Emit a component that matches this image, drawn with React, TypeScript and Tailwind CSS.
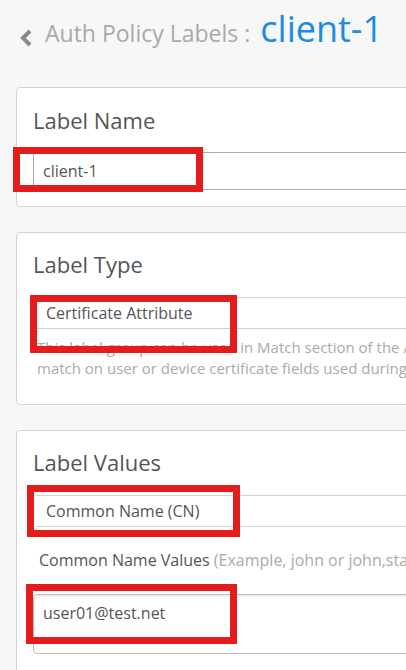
import React from 'react'

const font = { fontFamily: '"Open Sans", "Liberation Sans", sans-serif' }

function Card({ title, children, className = '' }: { title: string; children: React.ReactNode; className?: string }) {
  return (
    <div className={`w-[560px] bg-white border border-[#d4d4d4] rounded-[4px] px-4 ${className}`}>
      <h2 className="text-[22px] leading-[28px] text-[#555]">{title}</h2>
      {children}
    </div>
  )
}

function Mark({ className }: { className: string }) {
  return <div className={`absolute border-[7px] border-[#e41c1c] ${className}`} />
}

export default function App() {
  return (
    <div className="relative w-[406px] h-[670px] overflow-hidden bg-[#f7f7f7]" style={font}>
      <div className="pl-4">
        <div className="flex items-baseline h-[87px] pt-[2px]">
          <svg width="16" height="20" viewBox="0 0 16 20" className="ml-[2px] mr-[11px] self-center -mt-[14px]">
            <polyline points="12,3 5,10 12,17" fill="none" stroke="#8a8a8a" strokeWidth="4" />
          </svg>
          <span className="text-[23px] text-[#a9a9a9]">Auth Policy Labels :</span>
          <span className="text-[36px] text-[#1b8be6] ml-[10px]">client-1</span>
        </div>

        <Card title="Label Name" className="pt-[18px] pb-[16px]">
          <div className="mt-[18px] h-[38px] border-y border-l border-[#aaa] flex items-center pl-[9px] text-[16px] text-[#555]">
            client-1
          </div>
        </Card>

        <Card title="Label Type" className="mt-[25px] pt-[17px] pb-[25px]">
          <div className="mt-[19px] ml-[4px] h-[32px] border-y border-[#d0d0d0] flex items-center pl-[9px] text-[16px] text-[#555]">
            Certificate Attribute
          </div>
          <p className="mt-[8px] ml-[4px] text-[15px] leading-[21px] text-[#aaa] whitespace-nowrap">
            This label group can be used in Match section of the Auth Policy to
            <br />
            match on user or device certificate fields used during authentication.
          </p>
        </Card>

        <Card title="Label Values" className="mt-[25px] pt-[17px] pb-[30px]">
          <div className="mt-[19px] ml-[3px] h-[32px] border-y border-[#d0d0d0] flex items-center pl-[10px] text-[16px] text-[#555]">
            Common Name (CN)
          </div>
          <div className="mt-[22px] ml-[6px] text-[16px] leading-[22px] whitespace-nowrap">
            <span className="text-[#555]">Common Name Values </span>
            <span className="text-[#aaa]">(Example, john or john,stan)</span>
          </div>
          <div className="mt-[23px] h-[60px] border border-[#bbb] rounded-[4px] shadow-[inset_0_2px_3px_rgba(0,0,0,0.08)] pl-[9px] pt-[6px] text-[16px] text-[#555]">
            user01@test.net
          </div>
        </Card>
      </div>

      <Mark className="left-[13px] top-[147px] w-[190px] h-[45px]" />
      <Mark className="left-[30px] top-[295px] w-[207px] h-[58px]" />
      <Mark className="left-[27px] top-[485px] w-[213px] h-[52px]" />
      <Mark className="left-[26px] top-[584px] w-[211px] h-[60px]" />
    </div>
  )
}
